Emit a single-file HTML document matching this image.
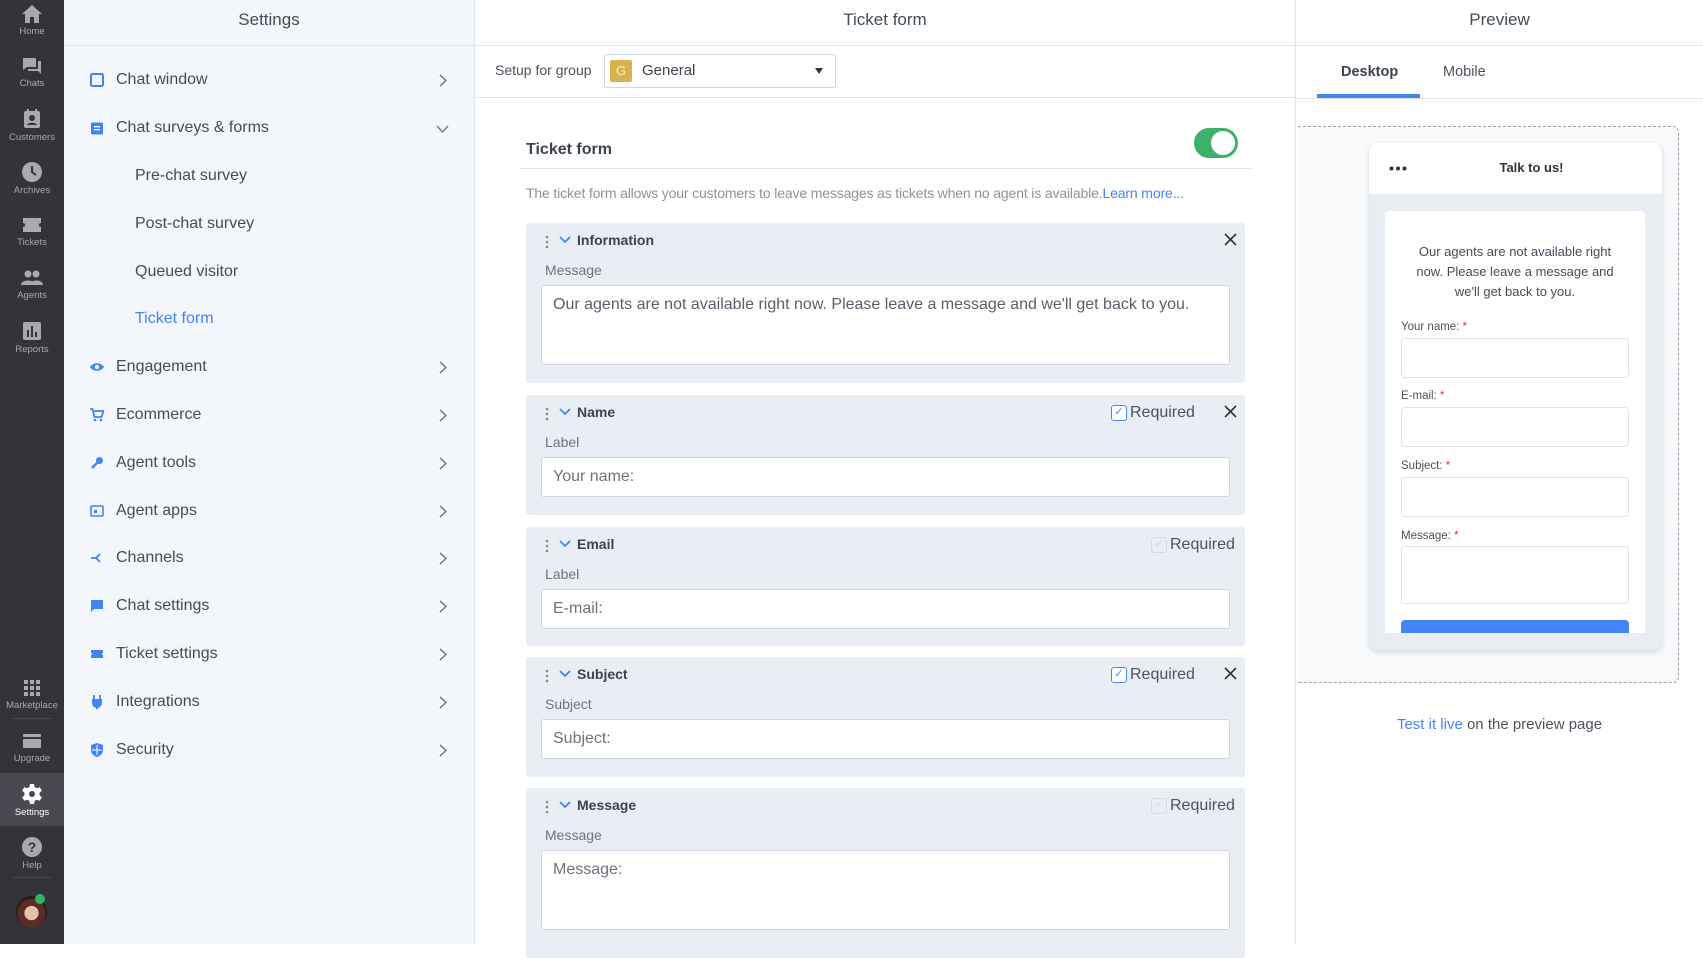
<!DOCTYPE html>
<html><head><meta charset="utf-8"><style>
*{box-sizing:border-box;margin:0;padding:0}
body{width:1703px;height:944px;overflow:hidden;font-family:"Liberation Sans",sans-serif;background:#fff;position:relative;color:#424d57}
.a{position:absolute}
#nav{left:0;top:0;width:64px;height:944px;background:#35333a}
.ni{position:absolute;left:0;width:64px;text-align:center;font-size:9.5px;color:#a9a8ad}
.ni svg{display:block;margin:0 auto 2px}
#set{left:64px;top:0;width:411px;height:944px;background:#f3f6fa;border-right:1px solid #e1e5ea}
.hd{position:absolute;top:0;height:46px;line-height:40px;text-align:center;font-size:17px;color:#424d57;border-bottom:1px solid #e1e5ea}
.si{position:absolute;left:0;width:411px;height:30px;font-size:16px;color:#424d57;line-height:30px}
.si .ic{position:absolute;left:26px;top:8px;width:14px;height:14px}
.si .tx{position:absolute;left:52px}
.si .sub{position:absolute;left:71px}
.si .ch{position:absolute;left:375px;top:9px}
#mid{left:475px;top:0;width:821px;height:944px;background:#fff;border-right:1px solid #e1e5ea}
.card{position:absolute;left:51px;width:719px;background:#e9eef4;border-radius:3px}
.card .dots{position:absolute;left:19px;top:12px}
.card .chv{position:absolute;left:33px;top:13px}
.card .ttl{position:absolute;left:51px;top:9px;font-size:14px;font-weight:bold;color:#3b444d}
.card .lbl{position:absolute;left:19px;top:39px;font-size:14px;color:#6b7580}
.card .inp{position:absolute;left:15px;top:62px;width:689px;height:40px;background:#fff;border:1px solid #cfd6de;border-radius:3px;font-size:16px;color:#6b737b;padding:10px 11px}
.card .x{position:absolute;left:698px;top:10px}
.req{position:absolute;top:9px;font-size:16px;color:#4a535c}
.cb{position:absolute;top:10px;width:16px;height:16px;border:1.5px solid #4a88f0;border-radius:3px;background:#fff;color:#4a88f0;font-size:11px;line-height:13px;text-align:center}
.cb.off{border-color:#d4dae0;background:transparent;color:#d4dae0}
#pre{left:1296px;top:0;width:407px;height:944px;background:#fff}
.pl{position:absolute;left:31px;font-size:11.5px;color:#4a535c}
.pl b{color:#e33;font-weight:normal}
.pi{position:absolute;left:31px;width:228px;background:#fff;border:1px solid #dfe3e8;border-radius:4px}
</style></head><body>

<div id="nav" class="a">
 <div class="ni" style="top:4px"><svg width="22" height="20" viewBox="0 0 22 20"><path d="M11 1L1 10h3v9h5v-6h4v6h5v-9h3z" fill="#a9a8ad"/></svg>Home</div>
 <div class="ni" style="top:56px"><svg width="22" height="20" viewBox="0 0 22 20"><path d="M2 2h13v9H6l-4 3z" fill="#a9a8ad"/><path d="M17 5h3v13l-3-3H7v-2h10z" fill="#a9a8ad"/></svg>Chats</div>
 <div class="ni" style="top:108px"><svg width="22" height="22" viewBox="0 0 22 22"><rect x="3" y="3" width="16" height="17" rx="2" fill="#a9a8ad"/><circle cx="11" cy="10" r="3" fill="#35333a"/><path d="M6 17c1-3 9-3 10 0z" fill="#35333a"/><rect x="6" y="1" width="2" height="4" fill="#a9a8ad"/><rect x="14" y="1" width="2" height="4" fill="#a9a8ad"/></svg>Customers</div>
 <div class="ni" style="top:161px"><svg width="22" height="22" viewBox="0 0 22 22"><circle cx="11" cy="11" r="10" fill="#a9a8ad"/><path d="M11 5v6l4 3" stroke="#35333a" stroke-width="2" fill="none"/></svg>Archives</div>
 <div class="ni" style="top:215px"><svg width="22" height="20" viewBox="0 0 22 20"><path d="M2 3h18v5a2 2 0 000 4v5H2v-5a2 2 0 000-4z" fill="#a9a8ad"/></svg>Tickets</div>
 <div class="ni" style="top:268px"><svg width="24" height="20" viewBox="0 0 24 20"><circle cx="8" cy="6" r="3.5" fill="#a9a8ad"/><circle cx="16" cy="6" r="3.5" fill="#a9a8ad"/><path d="M1 17c0-6 14-6 14 0z" fill="#a9a8ad"/><path d="M10 17c0-6 13-6 13 0z" fill="#a9a8ad"/></svg>Agents</div>
 <div class="ni" style="top:320px"><svg width="22" height="22" viewBox="0 0 22 22"><rect x="2" y="2" width="18" height="18" rx="2" fill="#a9a8ad"/><rect x="6" y="10" width="2" height="7" fill="#35333a"/><rect x="10" y="6" width="2" height="11" fill="#35333a"/><rect x="14" y="12" width="2" height="5" fill="#35333a"/></svg>Reports</div>
 <div class="ni" style="top:678px"><svg width="22" height="20" viewBox="0 0 22 20"><g fill="#a9a8ad"><rect x="3" y="2" width="4" height="4"/><rect x="9" y="2" width="4" height="4"/><rect x="15" y="2" width="4" height="4"/><rect x="3" y="8" width="4" height="4"/><rect x="9" y="8" width="4" height="4"/><rect x="15" y="8" width="4" height="4"/><rect x="3" y="14" width="4" height="4"/><rect x="9" y="14" width="4" height="4"/><rect x="15" y="14" width="4" height="4"/></g></svg>Marketplace</div>
 <div class="a" style="left:12px;top:718px;width:40px;height:1px;background:#4a484f"></div>
 <div class="ni" style="top:731px"><svg width="22" height="20" viewBox="0 0 22 20"><rect x="2" y="3" width="18" height="3" rx="1" fill="#a9a8ad"/><rect x="2" y="8" width="18" height="9" rx="1" fill="#a9a8ad"/></svg>Upgrade</div>
 <div class="a" style="left:0;top:773px;width:64px;height:53px;background:#4a4850"></div>
 <div class="ni" style="top:783px;color:#fff"><svg width="22" height="22" viewBox="0 0 22 22"><path d="M9 1h4l.6 3 2.3 1.3 2.9-1 2 3.4-2.3 2a7 7 0 010 2.6l2.3 2-2 3.4-2.9-1-2.3 1.3L13 21H9l-.6-3-2.3-1.3-2.9 1-2-3.4 2.3-2a7 7 0 010-2.6l-2.3-2 2-3.4 2.9 1L8.4 4z" fill="#fff"/><circle cx="11" cy="11" r="3" fill="#4a4850"/></svg>Settings</div>
 <div class="ni" style="top:836px"><svg width="22" height="22" viewBox="0 0 22 22"><circle cx="11" cy="11" r="10" fill="#a9a8ad"/><text x="11" y="16" text-anchor="middle" font-size="14" font-weight="bold" fill="#35333a" font-family="Liberation Sans">?</text></svg>Help</div>
 <div class="a" style="left:12px;top:877px;width:40px;height:1px;background:#4a484f"></div>
 <div class="a" style="left:16px;top:896px;width:31px;height:31px;border-radius:50%;background:radial-gradient(circle at 50% 55%,#e6c2ae 0 30%,#5a2d22 32% 60%,#2a1c1a 62%)"></div>
 <div class="a" style="left:35px;top:894px;width:10px;height:10px;border-radius:50%;background:#2fb563"></div>
</div>

<div id="set" class="a">
 <div class="hd" style="left:0;width:410px">Settings</div>
 <div class="si" style="top:65px"><svg class="ic" viewBox="0 0 14 14"><rect x="1" y="1" width="12" height="12" rx="1.5" fill="none" stroke="#4384f5" stroke-width="2"/></svg><span class="tx">Chat window</span><svg class="ch" width="8" height="13" viewBox="0 0 8 13"><path d="M1 1l6 5.5L1 12" stroke="#7a838c" stroke-width="1.6" fill="none"/></svg></div>
 <div class="si" style="top:113px"><svg class="ic" viewBox="0 0 14 14"><rect x="1" y="1.5" width="12" height="12" rx="1.5" fill="#4384f5"/><rect x="4" y="5" width="6" height="1.3" fill="#fff"/><rect x="4" y="8" width="6" height="1.3" fill="#fff"/></svg><span class="tx">Chat surveys &amp; forms</span><svg class="ch" style="left:372px;top:12px" width="13" height="8" viewBox="0 0 13 8"><path d="M1 1l5.5 6L12 1" stroke="#7a838c" stroke-width="1.6" fill="none"/></svg></div>
 <div class="si" style="top:161px"><span class="sub">Pre-chat survey</span></div>
 <div class="si" style="top:209px"><span class="sub">Post-chat survey</span></div>
 <div class="si" style="top:257px"><span class="sub">Queued visitor</span></div>
 <div class="si" style="top:304px;color:#4384f5"><span class="sub">Ticket form</span></div>
 <div class="si" style="top:352px"><svg class="ic" viewBox="0 0 14 14"><path d="M0 7c3-5 11-5 14 0-3 5-11 5-14 0z" fill="#4384f5"/><circle cx="7" cy="7" r="2.2" fill="#f3f6fa"/></svg><span class="tx">Engagement</span><svg class="ch" width="8" height="13" viewBox="0 0 8 13"><path d="M1 1l6 5.5L1 12" stroke="#7a838c" stroke-width="1.6" fill="none"/></svg></div>
 <div class="si" style="top:400px"><svg class="ic" viewBox="0 0 14 14"><path d="M0 1h2.5l2 8h7l2-6H4" fill="none" stroke="#4384f5" stroke-width="1.8"/><circle cx="5" cy="12" r="1.3" fill="#4384f5"/><circle cx="11" cy="12" r="1.3" fill="#4384f5"/></svg><span class="tx">Ecommerce</span><svg class="ch" width="8" height="13" viewBox="0 0 8 13"><path d="M1 1l6 5.5L1 12" stroke="#7a838c" stroke-width="1.6" fill="none"/></svg></div>
 <div class="si" style="top:448px"><svg class="ic" viewBox="0 0 14 14"><path d="M2 12l6-6" stroke="#4384f5" stroke-width="2.5"/><circle cx="9.5" cy="4.5" r="3.5" fill="#4384f5"/></svg><span class="tx">Agent tools</span><svg class="ch" width="8" height="13" viewBox="0 0 8 13"><path d="M1 1l6 5.5L1 12" stroke="#7a838c" stroke-width="1.6" fill="none"/></svg></div>
 <div class="si" style="top:496px"><svg class="ic" viewBox="0 0 14 14"><rect x="1" y="2" width="12" height="10" rx="1" fill="none" stroke="#4384f5" stroke-width="1.6"/><rect x="4" y="6" width="3" height="3" fill="#4384f5"/></svg><span class="tx">Agent apps</span><svg class="ch" width="8" height="13" viewBox="0 0 8 13"><path d="M1 1l6 5.5L1 12" stroke="#7a838c" stroke-width="1.6" fill="none"/></svg></div>
 <div class="si" style="top:543px"><svg class="ic" viewBox="0 0 14 14"><path d="M1 7h5l4-4M6 7l4 4" stroke="#4384f5" stroke-width="1.8" fill="none"/></svg><span class="tx">Channels</span><svg class="ch" width="8" height="13" viewBox="0 0 8 13"><path d="M1 1l6 5.5L1 12" stroke="#7a838c" stroke-width="1.6" fill="none"/></svg></div>
 <div class="si" style="top:591px"><svg class="ic" viewBox="0 0 14 14"><path d="M1 1h12v9H4l-3 3z" fill="#4384f5"/></svg><span class="tx">Chat settings</span><svg class="ch" width="8" height="13" viewBox="0 0 8 13"><path d="M1 1l6 5.5L1 12" stroke="#7a838c" stroke-width="1.6" fill="none"/></svg></div>
 <div class="si" style="top:639px"><svg class="ic" viewBox="0 0 14 14"><path d="M1 3h12v3a1 1 0 000 2v3H1V8a1 1 0 000-2z" fill="#4384f5"/></svg><span class="tx">Ticket settings</span><svg class="ch" width="8" height="13" viewBox="0 0 8 13"><path d="M1 1l6 5.5L1 12" stroke="#7a838c" stroke-width="1.6" fill="none"/></svg></div>
 <div class="si" style="top:687px"><svg class="ic" viewBox="0 0 14 14"><path d="M4 0v4M10 0v4" stroke="#4384f5" stroke-width="1.8"/><path d="M2 4h10v4a5 5 0 01-10 0z" fill="#4384f5"/><rect x="6" y="11" width="2" height="3" fill="#4384f5"/></svg><span class="tx">Integrations</span><svg class="ch" width="8" height="13" viewBox="0 0 8 13"><path d="M1 1l6 5.5L1 12" stroke="#7a838c" stroke-width="1.6" fill="none"/></svg></div>
 <div class="si" style="top:735px"><svg class="ic" viewBox="0 0 14 14"><path d="M7 0l6 2v5c0 4-3 6-6 7-3-1-6-3-6-7V2z" fill="#4384f5"/><path d="M7 2v10M2 7h10" stroke="#fff" stroke-width="1"/></svg><span class="tx">Security</span><svg class="ch" width="8" height="13" viewBox="0 0 8 13"><path d="M1 1l6 5.5L1 12" stroke="#7a838c" stroke-width="1.6" fill="none"/></svg></div>
</div>

<div id="mid" class="a">
 <div class="hd" style="left:0;width:820px">Ticket form</div>
 <div class="a" style="left:20px;top:62px;font-size:14px;color:#4a535c">Setup for group</div>
 <div class="a" style="left:129px;top:54px;width:232px;height:34px;border:1.5px solid #cfd6de;border-radius:3px;background:#fff">
  <div class="a" style="left:5px;top:5px;width:22px;height:22px;background:#d5b24c;border-radius:2px;color:#f6ecc8;font-size:13px;text-align:center;line-height:22px">G</div>
  <div class="a" style="left:37px;top:7px;font-size:15px;color:#3b444d">General</div>
  <div class="a" style="left:210px;top:13px;width:0;height:0;border-left:4px solid transparent;border-right:4px solid transparent;border-top:6px solid #333"></div>
 </div>
 <div class="a" style="left:0;top:97px;width:820px;height:1px;background:#e1e5ea"></div>
 <div class="a" style="left:51px;top:141px;font-size:16px;font-weight:bold;color:#3b444d">Ticket form</div>
 <div class="a" style="left:719px;top:128px;width:44px;height:30px;border-radius:15px;background:#3db06b"><div class="a" style="left:17px;top:3px;width:24px;height:24px;border-radius:50%;background:#fff"></div></div>
 <div class="a" style="left:44px;top:168px;width:732px;height:1px;background:#dde2e8"></div>
 <div class="a" style="left:51px;top:185px;font-size:14px;color:#8a939c;letter-spacing:-0.15px">The ticket form allows your customers to leave messages as tickets when no agent is available.<span style="color:#4384f5">Learn more...</span></div>

 <div class="card" style="top:223px;height:160px">
  <svg class="dots" width="4" height="14"><circle cx="2" cy="2" r="1.3" fill="#888"/><circle cx="2" cy="7" r="1.3" fill="#888"/><circle cx="2" cy="12" r="1.3" fill="#888"/></svg>
  <svg class="chv" width="12" height="8"><path d="M1 1l5 5 5-5" stroke="#4384f5" stroke-width="1.8" fill="none"/></svg>
  <div class="ttl">Information</div><div class="lbl">Message</div>
  <svg class="x" width="13" height="13"><path d="M1 1l11 11M12 1L1 12" stroke="#333" stroke-width="1.6"/></svg>
  <div class="inp" style="height:80px;color:#56606a">Our agents are not available right now. Please leave a message and we'll get back to you.</div>
 </div>

 <div class="card" style="top:395px;height:120px">
  <svg class="dots" width="4" height="14"><circle cx="2" cy="2" r="1.3" fill="#888"/><circle cx="2" cy="7" r="1.3" fill="#888"/><circle cx="2" cy="12" r="1.3" fill="#888"/></svg>
  <svg class="chv" width="12" height="8"><path d="M1 1l5 5 5-5" stroke="#4384f5" stroke-width="1.8" fill="none"/></svg>
  <div class="ttl">Name</div><div class="lbl">Label</div>
  <div class="cb" style="left:585px">✓</div><div class="req" style="left:604px">Required</div>
  <svg class="x" width="13" height="13"><path d="M1 1l11 11M12 1L1 12" stroke="#333" stroke-width="1.6"/></svg>
  <div class="inp">Your name:</div>
 </div>

 <div class="card" style="top:527px;height:119px">
  <svg class="dots" width="4" height="14"><circle cx="2" cy="2" r="1.3" fill="#888"/><circle cx="2" cy="7" r="1.3" fill="#888"/><circle cx="2" cy="12" r="1.3" fill="#888"/></svg>
  <svg class="chv" width="12" height="8"><path d="M1 1l5 5 5-5" stroke="#4384f5" stroke-width="1.8" fill="none"/></svg>
  <div class="ttl">Email</div><div class="lbl">Label</div>
  <div class="cb off" style="left:625px">✓</div><div class="req" style="left:644px">Required</div>
  <div class="inp">E-mail:</div>
 </div>

 <div class="card" style="top:657px;height:120px">
  <svg class="dots" width="4" height="14"><circle cx="2" cy="2" r="1.3" fill="#888"/><circle cx="2" cy="7" r="1.3" fill="#888"/><circle cx="2" cy="12" r="1.3" fill="#888"/></svg>
  <svg class="chv" width="12" height="8"><path d="M1 1l5 5 5-5" stroke="#4384f5" stroke-width="1.8" fill="none"/></svg>
  <div class="ttl">Subject</div><div class="lbl">Subject</div>
  <div class="cb" style="left:585px">✓</div><div class="req" style="left:604px">Required</div>
  <svg class="x" width="13" height="13"><path d="M1 1l11 11M12 1L1 12" stroke="#333" stroke-width="1.6"/></svg>
  <div class="inp">Subject:</div>
 </div>

 <div class="card" style="top:788px;height:170px">
  <svg class="dots" width="4" height="14"><circle cx="2" cy="2" r="1.3" fill="#888"/><circle cx="2" cy="7" r="1.3" fill="#888"/><circle cx="2" cy="12" r="1.3" fill="#888"/></svg>
  <svg class="chv" width="12" height="8"><path d="M1 1l5 5 5-5" stroke="#4384f5" stroke-width="1.8" fill="none"/></svg>
  <div class="ttl">Message</div><div class="lbl">Message</div>
  <div class="cb off" style="left:625px">✓</div><div class="req" style="left:644px">Required</div>
  <div class="inp" style="height:80px">Message:</div>
 </div>
</div>

<div id="pre" class="a">
 <div class="hd" style="left:0;width:407px">Preview</div>
 <div class="a" style="left:45px;top:64px;font-size:14.5px;font-weight:bold;color:#3b444d">Desktop</div>
 <div class="a" style="left:147px;top:64px;font-size:14.5px;color:#4a535c">Mobile</div>
 <div class="a" style="left:0;top:98px;width:407px;height:1px;background:#e1e5ea"></div>
 <div class="a" style="left:21px;top:94px;width:103px;height:4px;background:#4384f5"></div>
 <div class="a" style="left:2px;top:126px;width:381px;height:557px;border:1.5px dashed #9aa1a8;border-left:none;border-radius:0 6px 6px 0;background:#f7f9fb"></div>
 <div class="a" style="left:73px;top:143px;width:293px;height:507px;border-radius:9px;background:#e8edf3;box-shadow:0 2px 6px rgba(0,0,0,.15);overflow:hidden">
  <div class="a" style="left:0;top:0;width:293px;height:51px;background:#fff"></div>
  <svg class="a" style="left:20px;top:23px" width="18" height="5"><circle cx="2.5" cy="2.5" r="2" fill="#333"/><circle cx="9" cy="2.5" r="2" fill="#333"/><circle cx="15.5" cy="2.5" r="2" fill="#333"/></svg>
  <div class="a" style="left:0;top:17px;width:293px;padding-left:32px;text-align:center;font-size:13px;font-weight:bold;color:#333">Talk to us!</div>
  <div class="a" style="left:16px;top:68px;width:260px;height:500px;background:#fff;border-radius:4px">
   <div class="a" style="left:0;top:31px;width:260px;text-align:center;font-size:13px;line-height:20px;color:#424d57">Our agents are not available right<br>now. Please leave a message and<br>we'll get back to you.</div>
   <div class="pl" style="top:110px;left:16px">Your name: <b>*</b></div>
   <div class="pi" style="top:127px;left:16px;height:40px"></div>
   <div class="pl" style="top:179px;left:16px">E-mail: <b>*</b></div>
   <div class="pi" style="top:196px;left:16px;height:40px"></div>
   <div class="pl" style="top:249px;left:16px">Subject: <b>*</b></div>
   <div class="pi" style="top:266px;left:16px;height:40px"></div>
   <div class="pl" style="top:319px;left:16px">Message: <b>*</b></div>
   <div class="pi" style="top:335px;left:16px;height:58px"></div>
   <div class="a" style="left:16px;top:409px;width:228px;height:20px;background:#4384f5;border-radius:4px 4px 0 0"></div>
  </div>
  <div class="a" style="left:0;top:490px;width:293px;height:17px;background:#e8edf3"></div>
 </div>
 <div class="a" style="left:0;top:716px;width:407px;text-align:center;font-size:15px;color:#4a535c"><span style="color:#4384f5">Test it live</span> on the preview page</div>
</div>
</body></html>
